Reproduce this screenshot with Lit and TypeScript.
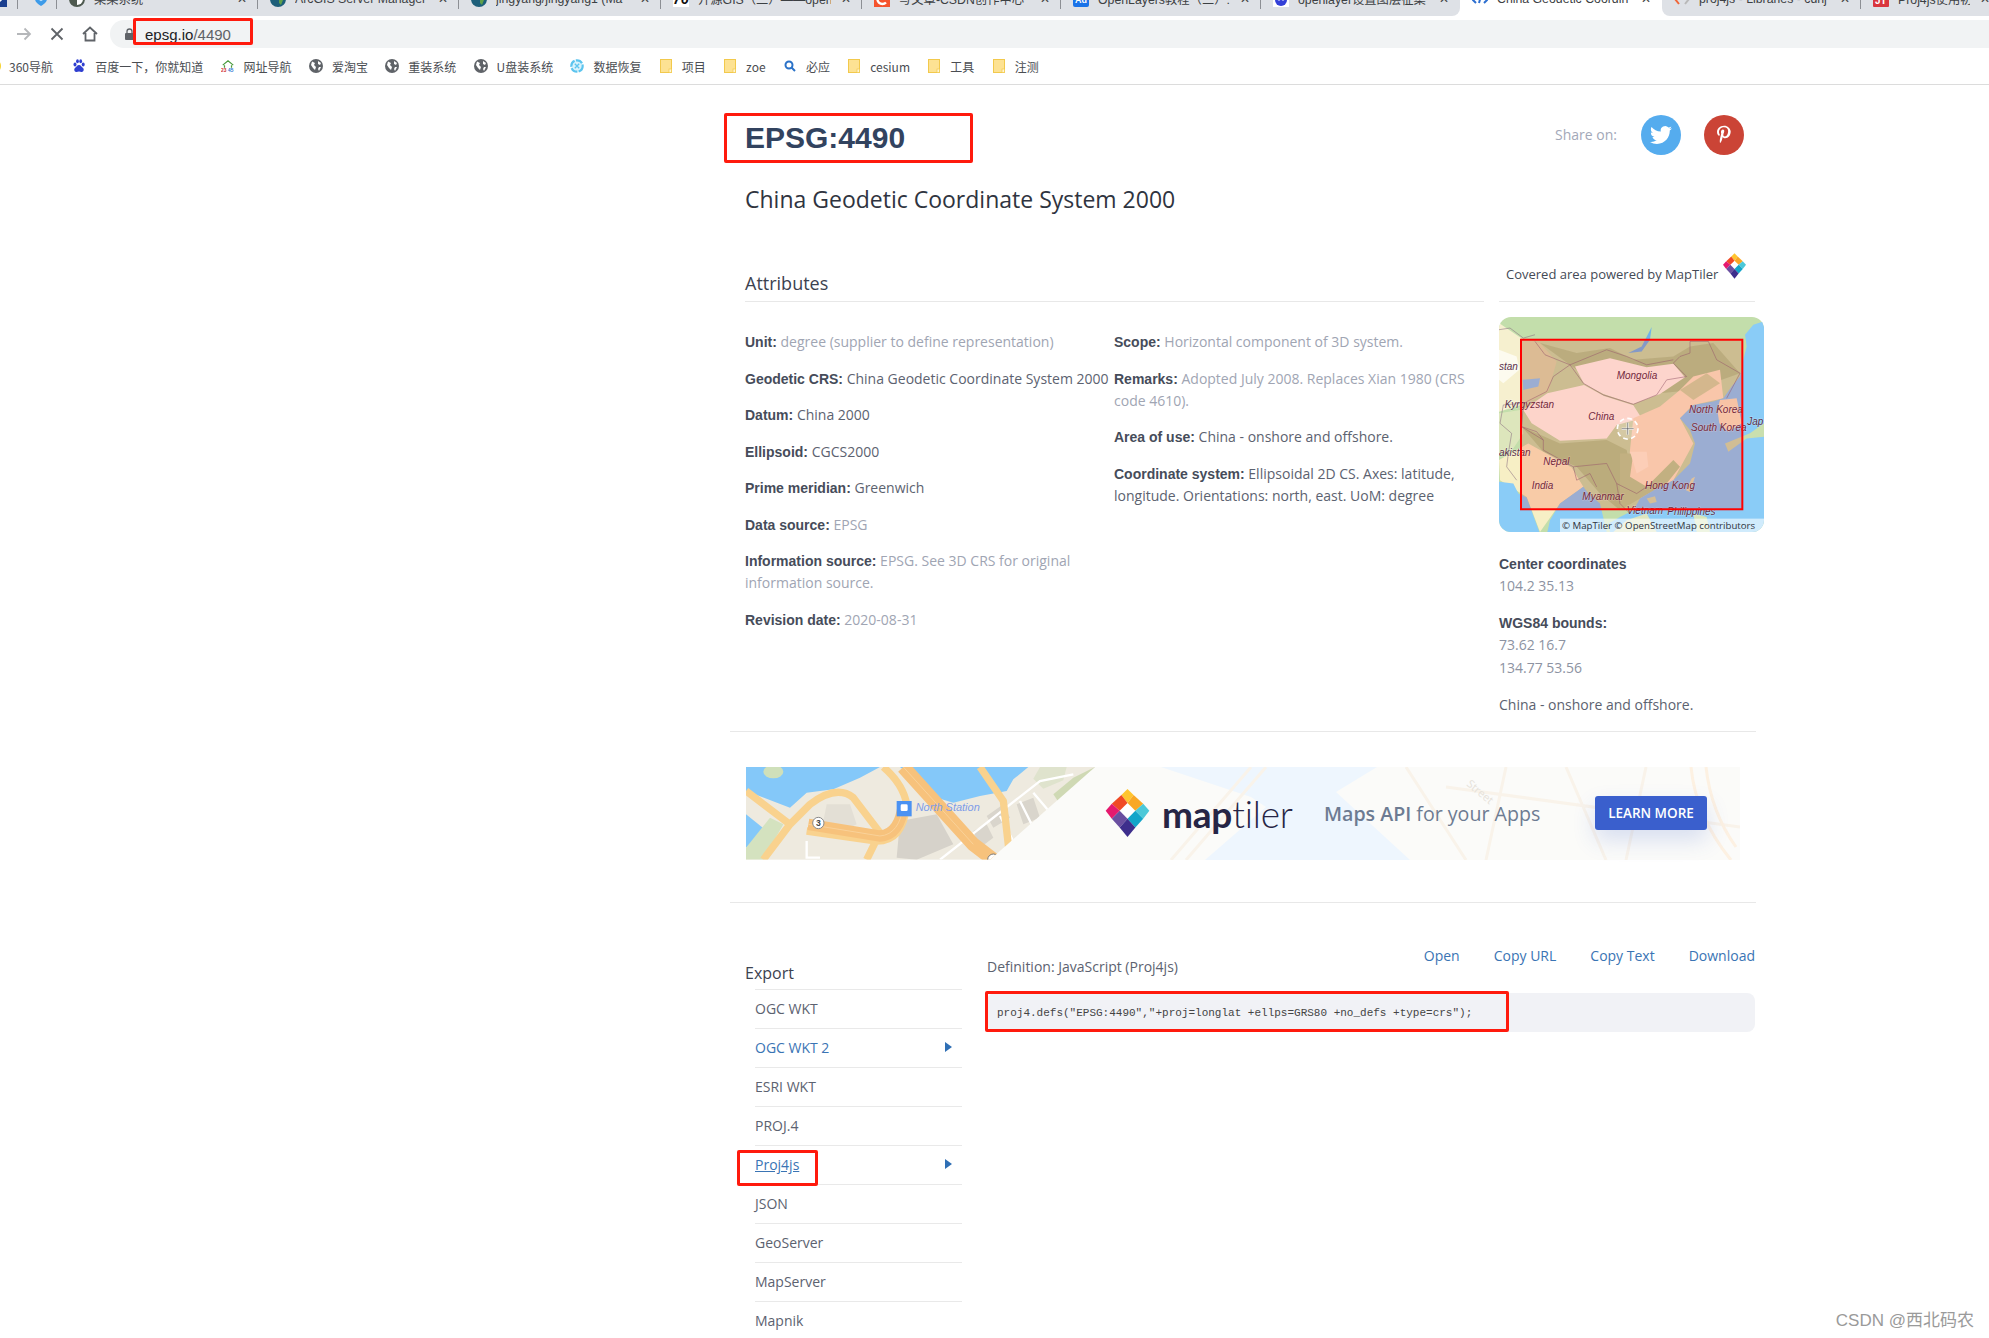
import { LitElement, html, css, svg } from "lit";
import { customElement } from "lit/decorators.js";

const pin = svg`
  <polygon points="50,32 68,50 50,68 32,50" fill="#fff"/>
  <polygon points="36,14 50,0 64,14 50,32" fill="#ffc52f"/>
  <polygon points="64,14 86,34 68,50 50,32" fill="#f9a826"/>
  <polygon points="36,14 50,32 32,50 14,34" fill="#f04a25"/>
  <polygon points="14,34 32,50 14,68 0,50" fill="#e5196e"/>
  <polygon points="86,34 100,50 86,68 68,50" fill="#4cc8d8"/>
  <polygon points="32,50 50,68 32,88 14,68" fill="#6a4fa0"/>
  <polygon points="68,50 86,68 68,88 50,68" fill="#12a5c9"/>
  <polygon points="50,68 68,88 50,110 32,88" fill="#3d2e8c"/>`;

const globe = html`<svg class="ic" viewBox="0 0 14 14"><circle cx="7" cy="7" r="7" fill="#5f6368"/><path d="M3 2.500 6 4 5 6 7 8 6 11 4 9 2 6ZM9 2l3 2-1 2-2-1ZM10 8l2 0-2 4-1-2Z" fill="#fff"/></svg>`;
const folder = html`<svg class="ic" viewBox="0 0 14 14"><rect x="1.500" y=".5" width="11" height="13" fill="#fde293" stroke="#f2c94c"/><rect x="10" y="10" width="2.500" height="3.500" fill="#fff6d5" stroke="#f2c94c" stroke-width=".7"/></svg>`;
const baidu = html`<svg class="ic" viewBox="0 0 14 14" fill="#2f3fd0"><ellipse cx="3" cy="5.500" rx="1.500" ry="2"/><ellipse cx="5.500" cy="2.200" rx="1.400" ry="2"/><ellipse cx="8.700" cy="2.200" rx="1.400" ry="2"/><ellipse cx="11.200" cy="5.500" rx="1.500" ry="2"/><path d="M7 6c2 0 2.500 2 4 3 1.500 1.500.5 4-1.500 4-1 0-1.500-.4-2.500-.4S5.500 13 4.500 13C2.500 13 1.500 10.500 3 9c1.500-1 2-3 4-3Z"/></svg>`;
const house = html`<svg class="ic" viewBox="0 0 16 14"><path d="M2 6 8 1l6 5M4 6v3M12 6v3" fill="none" stroke="#4a9a3c" stroke-width="1.400"/><text class="n" x="0" y="14" font-size="5.500" fill="#d03030" font-weight="700">23</text><text class="n" x="8" y="14" font-size="5.500" fill="#2a6fd0" font-weight="700">45</text></svg>`;
const recover = html`<svg class="ic" viewBox="0 0 16 16"><circle cx="8" cy="8" r="6.500" fill="#d8f2fb" stroke="#5cc4ee" stroke-width="2.500" stroke-dasharray="8 1.500"/><path d="M5.500 5.500l5 5M10.500 5.500l-5 5" stroke="#5cc4ee" stroke-width="1.500"/></svg>`;
const search = html`<svg class="ic" viewBox="0 0 14 14"><circle cx="6" cy="6" r="3.500" fill="none" stroke="#2a72c8" stroke-width="2"/><path d="M8.500 8.500 12 12" stroke="#2a72c8" stroke-width="2"/></svg>`;
const dot = html`<svg class="ic-first" viewBox="0 0 16 14"><circle cx="8" cy="7" r="7" fill="#f6d32d"/></svg>`;

const bookmarks = [
  [baidu, "百度一下，你就知道"], [house, "网址导航"], [globe, "爱淘宝"], [globe, "重装系统"],
  [globe, "U盘装系统"], [recover, "数据恢复"], [folder, "项目"], [folder, "zoe"], [search, "必应"],
  [folder, "cesium"], [folder, "工具"], [folder, "注测"],
];

const edge = html`<svg class="fav edge" viewBox="0 0 16 16"><rect width="16" height="16" fill="#1b3f8f"/><path d="M4 14 14 4" stroke="#fff" stroke-width="3"/></svg>`;
const shield = html`<svg class="fav" viewBox="0 0 16 16"><path d="M8 1 14 3v5c0 3-3 5-6 7-3-2-6-4-6-7V3Z" fill="#3d9be9"/><path d="M3 6l5 3 5-3" stroke="#bfe0fa" fill="none" stroke-width="2"/></svg>`;
const gl = html`<svg class="fav" viewBox="0 0 16 16"><circle cx="8" cy="8" r="8" fill="#4e5a50"/><path d="M8 2a6 6 0 0 1 0 12Z" fill="#fff"/></svg>`;
const earth = html`<svg class="fav" viewBox="0 0 16 16"><circle cx="8" cy="8" r="8" fill="#1d5f7a"/><path d="M3 5l4-2 2 3-3 3ZM9 8l4 1-2 5-2-2Z" fill="#5fa04a"/></svg>`;
const seven = html`<svg class="fav" viewBox="0 0 16 16"><rect width="16" height="16" fill="#fff"/><text class="n" x="0" y="13" font-size="14" font-weight="700" font-style="italic" fill="#111">76</text></svg>`;
const csdn = html`<svg class="fav" viewBox="0 0 16 16"><rect width="16" height="16" fill="#f5532d"/><path d="M12 4.500A5 5 0 1 0 12 11.500" stroke="#fff" stroke-width="2.400" fill="none"/></svg>`;
const ad = html`<svg class="fav" viewBox="0 0 16 16"><rect width="16" height="16" rx="2" fill="#1a73e8"/><text class="n" x="2" y="12" font-size="9" font-weight="700" fill="#fff">Ad</text></svg>`;
const baiduF = html`<svg class="fav" viewBox="0 0 16 16"><rect width="16" height="16" fill="#fff"/><circle cx="8" cy="9" r="6" fill="#3340d8"/><circle cx="6" cy="8" r="1.500" fill="#fff"/><circle cx="10" cy="8" r="1.500" fill="#fff"/></svg>`;
const epsgF = html`<svg class="fav" viewBox="0 0 16 16"><path d="M4 6 1 9l3 3M12 6l3 3-3 3M7 12l2-7" fill="none" stroke="#2d6fd0" stroke-width="2"/></svg>`;
const cdnF = html`<svg class="fav" viewBox="0 0 16 16"><path d="M5 3 1 8l4 5" fill="none" stroke="#f0673a" stroke-width="2"/><path d="M11 3l4 5-4 5" fill="none" stroke="#b9b9b9" stroke-width="2"/></svg>`;
const jsF = html`<svg class="fav" viewBox="0 0 16 16"><rect width="16" height="16" rx="1" fill="#d9363e"/><text class="n" x="2" y="13" font-size="10" font-weight="700" fill="#fff">JT</text></svg>`;

const tabs = [
  { w: 18, icon: edge, text: "", first: true },
  { w: 39, icon: shield, text: "", lead: true },
  { w: 201, icon: gl, text: "某某系统" },
  { w: 201, icon: earth, text: "ArcGIS Server Manager" },
  { w: 202, icon: earth, text: "jingyang/jingyang1 (Ma" },
  { w: 201, icon: seven, text: "开源GIS（二）——open" },
  { w: 199, icon: csdn, text: "写文章-CSDN创作中心" },
  { w: 200, icon: ad, text: "OpenLayers教程（三）: 多" },
  { w: 199, icon: baiduF, text: "openlayer设置图层征集" },
  { w: 202, icon: epsgF, text: "China Geodetic Coordin", active: true },
  { w: 199, icon: cdnF, text: "proj4js - Libraries - cdnj" },
  { w: 140, icon: jsF, text: "Proj4js使用初步入门" },
];

const col1: [string, string, string][] = [
  ["Unit:", "degree (supplier to define representation)", "soft"],
  ["Geodetic CRS:", "China Geodetic Coordinate System 2000", ""],
  ["Datum:", "China 2000", ""],
  ["Ellipsoid:", "CGCS2000", ""],
  ["Prime meridian:", "Greenwich", ""],
  ["Data source:", "EPSG", "soft"],
  ["Information source:", "EPSG. See 3D CRS for original information source.", "soft"],
  ["Revision date:", "2020-08-31", "soft"],
];
const col2: [string, string, string][] = [
  ["Scope:", "Horizontal component of 3D system.", "soft"],
  ["Remarks:", "Adopted July 2008. Replaces Xian 1980 (CRS code 4610).", "soft"],
  ["Area of use:", "China - onshore and offshore.", ""],
  ["Coordinate system:", "Ellipsoidal 2D CS. Axes: latitude, longitude. Orientations: north, east. UoM: degree", ""],
];

const exports_ = [
  ["OGC WKT", ""], ["OGC WKT 2", "open"], ["ESRI WKT", ""], ["PROJ.4", ""], ["Proj4js", "current"],
  ["JSON", ""], ["GeoServer", ""], ["MapServer", ""], ["Mapnik", ""],
];

const chinaMap = html`<svg class="map" viewBox="117 682 795 643" preserveAspectRatio="none">
  <rect x="117" y="682" width="795" height="643" fill="#c3deab"/>
  <polygon points="117,700 183,745 183,945 117,965" fill="#f6f0cf"/>
  <polygon points="117,780 170,800 178,840 130,880 117,870" fill="#fdfbef"/>
  <polygon points="183,745 240,760 290,815 265,905 190,945" fill="#d6dcae"/>
  <polygon points="188,870 240,865 235,890 190,900" fill="#8accf7"/>
  <path d="M505 790 L545 770 L575 712 L570 750 L545 785 Z" fill="#6fb4ea"/>
  <polygon points="240,760 350,790 450,775 520,810 640,800 690,770 760,760 840,850 700,900 600,910 350,840" fill="#b0cb95"/>
  <polygon points="345,830 450,805 560,832 640,822 675,862 600,912 520,942 430,912 372,882" fill="#fdfaf0"/>
  <polygon points="190,960 262,910 372,885 432,918 520,946 545,985 470,1005 440,1045 300,1052 215,1000" fill="#fdf9ee"/>
  <polygon points="185,1010 300,1060 440,1050 500,1080 510,1130 480,1260 420,1210 350,1130 250,1085" fill="#b0ca92"/>
  <polygon points="520,985 600,950 660,900 700,860 780,840 790,925 700,945 660,985 700,1060 640,1170 540,1225 505,1150 510,1080" fill="#f8e9c8"/>
  <polygon points="660,900 740,850 780,880 700,930" fill="#cdd8a6"/>
  <polygon points="480,1090 520,1090 510,1160 560,1190 640,1110 660,1130 620,1180 540,1225 480,1260" fill="#b8cf98"/>
  <polygon points="510,1085 560,1085 565,1130 530,1150" fill="#fcf2d8"/>
  <polygon points="117,1110 205,1060 335,1132 370,1190 300,1240 240,1325 200,1220 120,1170" fill="#f7efc5"/>
  <polygon points="117,970 180,960 190,1030 150,1090 117,1090" fill="#dde6bc"/>
  <path d="M912 695 880 705 855 735 860 770 850 810 840 860 815 890 790 925 760 935 700 945 660 985 690 1020 705 1060 690 1120 640 1170 590 1195 540 1225 520 1260 480 1280 445 1300 450 1325 912 1325Z" fill="#8accf7"/>
  <path d="M117 1175 160 1180 175 1210 200 1222 238 1325 117 1325Z" fill="#8accf7"/>
  <path d="M300 1240 370 1190 385 1210 420 1240 440 1325 262 1325 270 1290Z" fill="#8accf7"/>
  <polygon points="780,930 830,925 845,1000 805,1025 778,1000 772,960" fill="#f6e6c2"/>
  <polygon points="912,1000 870,1030 795,1060 805,1085 860,1045 912,1040" fill="#c9dfae"/>
  <polygon points="705,1160 690,1205 678,1200 695,1165" fill="#d9e3b8"/>
  <polygon points="560,1225 585,1218 590,1235 570,1240" fill="#cfe0ae"/>
  <polygon points="700,1270 740,1280 750,1325 710,1325" fill="#d8e5b9"/>
  <polygon points="500,1290 560,1270 590,1325 460,1325" fill="#dfe6bf"/>
  <path d="M225 755 255 795 330 825 370 880 430 915 520 943 590 915 620 870 680 860 640 820 660 800 690 790 690 755 745 755 770 810 840 850 M330 825 440 780 500 800 560 825 640 810 M330 825 280 860 260 905 190 940 130 945 M190 940 185 1010 250 1050 250 1080 340 1130 440 1120 470 1180 530 1210 560 1190 M117 720 150 715 190 745 225 735 M130 945 120 1000 155 1030 145 1090 140 1130 170 1170 M185 1010 230 1025 250 1050 M340 1130 350 1170 390 1150 410 1190 M470 1180 480 1240 510 1270 M840 850 800 925" fill="none" stroke="#86697f" stroke-width="1.600"/>
  <g class="maplabel">
    <text x="470" y="866">Mongolia</text><text x="385" y="990">China</text><text x="134" y="955">Kyrgyzstan</text>
    <text x="687" y="968">North Korea</text><text x="693" y="1022">South Korea</text><text x="862" y="1006">Jap</text>
    <text x="117" y="842">stan</text><text x="117" y="1098">akistan</text><text x="250" y="1125">Nepal</text>
    <text x="215" y="1197">India</text><text x="367" y="1230">Myanmar</text><text x="555" y="1197">Hong Kong</text>
    <text x="500" y="1272">Vietnam</text><text x="622" y="1275">Philippines</text>
  </g>
  <rect x="183" y="750" width="664" height="507" fill="rgba(255,0,0,.15)" stroke="#f00" stroke-width="6"/>
  <circle cx="503" cy="1016" r="31" fill="none" stroke="#fff" stroke-width="5" stroke-dasharray="14 10"/>
  <circle cx="503" cy="1016" r="31" fill="rgba(255,255,255,.18)"/>
  <path d="M503 998v36M485 1016h36" stroke="#fff" stroke-width="6"/>
  <path d="M503 998v36M485 1016h36" stroke="#555" stroke-width="2"/>
  <rect x="300" y="1285" width="612" height="40" fill="rgba(255,255,255,.6)"/>
  <text class="attr" x="306" y="1316">© MapTiler © OpenStreetMap contributors</text>
</svg>`;

const bannerArt = html`<svg class="art" viewBox="0 0 994 93" preserveAspectRatio="none">
  <rect width="994" height="93" fill="#fbfbf9"/>
  <polygon points="415,0 631,0 590,25 664,93 459,93 520,40 505,30" fill="#eef6fe"/>
  <g fill="none" stroke="#f9f3ea" stroke-width="3">
    <path d="M505 0 425 93M520 0 440 93M660 0 720 93M700 20 994 60M760 0 740 93M820 0 860 93M900 0 880 93"/>
    <path d="M945 0q5 50 40 93M960 0q5 45 30 80" stroke="#fdf1e2"/>
  </g>
  <text class="street" x="720" y="18" transform="rotate(40 720 18)">Street</text>
  <g transform="translate(-6 -6) scale(.33333)">
    <clipPath id="mc"><polygon points="18,18 1065,18 750,296 18,296"/></clipPath>
    <g clip-path="url(#mc)">
      <rect x="18" y="18" width="1050" height="280" fill="#eeeadf"/>
      <path d="M18 18H420L360 50 280 85 200 95 150 140 18 90Z" fill="#84c8f9"/>
      <path d="M480 18H865L820 55 800 90 720 105 640 125 590 110 Z" fill="#84c8f9"/>
      <path d="M18 160 80 210 18 260Z" fill="#84c8f9"/>
      <ellipse cx="100" cy="32" rx="30" ry="20" fill="#cfe0ba"/>
      <path d="M18 296V260L90 170 130 190 70 296Z" fill="#d4e2bf"/>
      <path d="M940 100 1000 50 1065 18 1065 90 960 130Z" fill="#cfd9b4"/>
      <path d="M900 18h80l-10 40-60 25-30-30Z" fill="#dfe3cd"/>
      <path d="M480 180 590 160 640 250 530 296 470 290Z" fill="#d6d2ca"/>
      <path d="M830 130 880 110 900 170 850 190ZM740 165 790 130 810 170 760 200ZM700 210 740 190 760 230 720 260Z" fill="#d9d5cc"/>
      <path d="M260 130h70l20 60-60 30-40-40Z" fill="#e3dfd5"/>
      <g fill="none" stroke="#fff" stroke-width="7">
        <path d="M600 296 900 60 1000 40M680 240 640 180M780 165 830 260M880 95 960 190M840 120 900 240M200 240v50h40"/>
      </g>
      <g fill="none" stroke="#f9d28e" stroke-width="22" stroke-linejoin="round">
        <path d="M18 90 150 190 70 296M150 190 210 130Q290 70 340 110L420 215 380 296M720 18 790 120 810 296M200 210 410 240Q490 240 500 130 490 70 430 18"/>
      </g>
      <path d="M490 18 700 250 760 296" fill="none" stroke="#f7c27c" stroke-width="42"/>
      <path d="M205 190 420 225Q480 220 490 130" fill="none" stroke="#f7c27c" stroke-width="34"/>
      <path d="M205 190 420 225Q480 220 490 130M490 18 700 250" fill="none" stroke="#fbd9a8" stroke-width="2"/>
      <circle cx="235" cy="186" r="17" fill="#fff" stroke="#888" stroke-width="3"/>
      <text class="badge" x="235" y="195" text-anchor="middle">3</text>
      <rect x="470" y="120" width="45" height="46" fill="#4b92f2"/>
      <rect x="482" y="130" width="21" height="20" rx="4" fill="#fff"/>
      <text class="stn" x="527" y="150">North Station</text>
      <circle cx="760" cy="296" r="17" fill="#fff" stroke="#777" stroke-width="3"/>
    </g>
  </g>
</svg>`;

@customElement("app-root")
export class AppRoot extends LitElement {
  static styles = css`
    :host { display: block; position: relative; width: 1989px; height: 1338px; overflow: hidden; background: #fff; font-family: "Open Sans", sans-serif; font-size: 14px; color: #5c6270; }
    .tabstrip { height: 16px; background: #fff; overflow: hidden; display: flex; font: 12.300px "Liberation Sans", "Noto Sans CJK SC", sans-serif; color: #3c4043; }
    .tab { box-sizing: border-box; height: 34px; margin-top: -18px; background: #dee1e6 linear-gradient(#8c8f94, #8c8f94) no-repeat right top / 1px 27px; display: flex; align-items: center; gap: 9px; padding: 0 10px 0 12px; flex: none; overflow: hidden; }
    .tab.first { padding: 0; }
    .tab.lead { padding-left: 15px; padding-right: 0; }
    .tab.active { background: #fff; border-radius: 8px 8px 0 0; }
    .tab.pre { background-image: none; border-bottom-right-radius: 8px; }
    .tab.post { border-bottom-left-radius: 8px; }
    .fav { width: 16px; height: 16px; flex: none; }
    .edge { margin-left: -9px; }
    .tabtext { flex: 1; white-space: nowrap; overflow: hidden; min-width: 0; }
    .close { font-size: 12px; width: 12px; flex: none; color: #444; text-align: center; }
    .n { font-family: "Liberation Sans", sans-serif; }

    .toolbar { height: 32px; display: flex; padding: 4px 0 0 16px; box-sizing: border-box; align-items: stretch; }
    .nav { width: 16px; height: 16px; margin-right: 17px; align-self: center; flex: none; }
    .pill { flex: 1; margin-left: -5px; background: #f1f3f4; border-radius: 14px 0 0 14px; display: flex; align-items: center; padding-left: 15px; gap: 11px; font: 15px "Liberation Sans", sans-serif; color: #202124; }
    .lock { width: 9px; height: 12px; flex: none; }
    .path { color: #5f6368; }

    .bookmarks { height: 36px; box-sizing: content-box; border-bottom: 1px solid #dcdcdc; display: flex; align-items: center; padding-left: 9px; gap: 17.300px; font: 12px "Noto Sans CJK SC", sans-serif; color: #4a4d52; white-space: nowrap; overflow: hidden; }
    .bm { display: flex; align-items: center; gap: 9px; flex: none; }
    .bm.first { margin-left: -23px; margin-right: 2px; gap: 7px; }
    .ic { width: 14px; height: 14px; flex: none; }
    .ic-first { width: 16px; height: 14px; flex: none; }

    .page { margin-left: 730px; width: 1026px; }
    .top { height: 99px; padding: 0 12px 0 15px; display: flex; align-items: center; }
    h1 { margin: 0; padding-top: 6px; font: 700 30px "Liberation Sans", sans-serif; color: #32435f; flex: 1; }
    .share { color: #a3a8b8; margin-right: 24px; }
    .social { width: 40px; height: 40px; border-radius: 50%; display: flex; align-items: center; justify-content: center; flex: none; }
    .social svg { width: 22px; height: 22px; fill: #fff; }
    .tw { background: #55acee; margin-right: 23px; }
    .pt { background: #cb4436; }
    h2 { margin: -1px 0 0 15px; font: 400 23px/32px "Open Sans", sans-serif; color: #2f3440; }

    .info { display: flex; margin-top: 38px; padding-left: 15px; width: 1019px; box-sizing: border-box; }
    .attrs { width: 739px; flex: none; padding-top: 18px; }
    h3 { margin: 0; font: 400 18px/24px "Open Sans", sans-serif; color: #3c4250; padding-bottom: 6px; border-bottom: 1px solid #e8e8e8; }
    .cols { display: grid; grid-template-columns: 369px 370px; margin-top: 29px; }
    .attr-item { margin: 0 0 14.500px; line-height: 22px; }
    .attr-item.soft { color: #a0a5b3; }
    b { font: 700 14px "Liberation Sans", sans-serif; color: #464c5a; }
    .side { margin-left: 15px; width: 265px; flex: none; }
    .side-head { height: 48px; width: 256px; border-bottom: 1px solid #e8e8e8; display: flex; align-items: flex-start; font-size: 13px; color: #444a56; }
    .cover { padding: 12px 5px 0 7px; line-height: 18px; white-space: nowrap; }
    .mini { width: 23px; height: 26px; flex: none; }
    .map { display: block; width: 265px; height: 215px; margin-top: 15px; border-radius: 12px; }
    .maplabel text { font: italic 30px "Liberation Sans", sans-serif; fill: #5a3048; paint-order: stroke; stroke: rgba(255,255,255,.35); stroke-width: 3px; }
    .attr { font: 29px "Open Sans", sans-serif; fill: #2f3440; }
    .facts { margin-top: 20.500px; line-height: 22.400px; }
    .facts p { margin: 0 0 14.500px; color: #8d93a2; }
    .facts p:last-child { margin-bottom: 0; color: #5c6270; }
    .facts span { display: block; }

    hr { border: 0; border-top: 1px solid #e8e8e8; margin: 0; }
    .hr1 { margin-top: 15px; }
    .banner { position: relative; margin: 35px 0 0 16px; width: 994px; height: 93px; display: flex; align-items: center; }
    .art { position: absolute; inset: 0; width: 100%; height: 100%; }
    .street { font: 11px "Open Sans", sans-serif; fill: #e6e2da; }
    .badge { font: 700 26px "Liberation Sans", sans-serif; fill: #444; }
    .stn { font: italic 33px "Liberation Sans", sans-serif; fill: #7d9ce8; }
    .bn { position: relative; display: flex; align-items: center; padding-left: 359px; }
    .logo { width: 45px; height: 48px; flex: none; }
    .word { margin-left: 12px; width: 162px; flex: none; font: 700 37px/1 "Lato", sans-serif; color: #262545; letter-spacing: -.2px; }
    .word i { font-style: normal; font-weight: 300; }
    .tag { flex: none; width: 271px; font: 400 19.600px "Open Sans", sans-serif; color: #6d7b92; white-space: nowrap; }
    .tag em { font-style: normal; font-weight: 600; }
    .btn { width: 112px; height: 34px; background: #3a5fcd; border-radius: 3px; color: #fff; font: 600 13.500px/34px "Open Sans", sans-serif; text-align: center; box-shadow: 0 10px 22px rgba(58,95,205,.18); flex: none; }
    .hr2 { margin-top: 42px; }

    .export { display: flex; padding: 0 1px 0 15px; }
    .ex-side { width: 217px; flex: none; padding-top: 59px; margin-right: 25px; }
    .ex-title { font: 400 16px/22px "Open Sans", sans-serif; color: #3c4250; margin-bottom: 5px; padding-top: 0; }
    .ex-list { list-style: none; margin: 0 0 0 10px; padding: 0; }
    .ex-list li { height: 39px; box-sizing: border-box; border-top: 1px solid #e9e9e9; display: flex; align-items: center; justify-content: space-between; padding-right: 10px; }
    .ex-list li.open, .ex-list li.current { color: #3a74b4; }
    .ex-list li.current span { text-decoration: underline; }
    .tri { width: 7px; height: 10px; flex: none; margin-top: -2px; fill: #2f6fb5; }
    .ex-main { flex: 1; padding-top: 42px; }
    .def-head { display: flex; justify-content: space-between; height: 33px; line-height: 22px; }
    .def-title { padding-top: 11px; }
    .links { display: flex; gap: 34px; color: #3a74b4; }
    .code { height: 39px; background: #f1f2f6; border-radius: 8px; margin-top: 15px; padding-left: 10px; font: 11px/41px "Liberation Mono", monospace; color: #444; white-space: pre; }

    .mark { position: absolute; border: 3px solid #ff1a0d; border-radius: 2px; box-sizing: border-box; pointer-events: none; }
    .m-url { left: 133px; top: 18px; width: 120px; height: 27px; }
    .m-h1 { left: 724px; top: 113px; width: 249px; height: 50px; }
    .m-code { left: 985px; top: 991px; width: 524px; height: 41px; }
    .m-proj { left: 737px; top: 1150px; width: 81px; height: 36px; }
    .watermark { position: absolute; right: 15px; bottom: 7px; font: 17px "Liberation Sans", "Noto Sans CJK SC", sans-serif; color: #9a9a9a; }
  `;

  private attr(a: [string, string, string]) {
    return html`<p class="attr-item ${a[2]}"><b>${a[0]}</b> ${a[1]}</p>`;
  }

  render() {
    return html`
      <div class="tabstrip">
        ${tabs.map((t: any, i) => html`<div class="tab ${t.first ? "first" : ""} ${t.lead ? "lead" : ""} ${t.active ? "active" : ""} ${(tabs[i + 1] as any)?.active ? "pre" : ""} ${(tabs[i - 1] as any)?.active ? "post" : ""}" style="width:${t.w}px">
          ${t.icon}
          ${t.text ? html`<span class="tabtext">${t.text}</span><span class="close">✕</span>` : ""}
        </div>`)}
      </div>
      <div class="toolbar">
        <svg class="nav" viewBox="0 0 16 16"><path d="M1 8h13M8.500 2.500 14 8l-5.500 5.500" fill="none" stroke="#b5b7ba" stroke-width="1.800"/></svg>
        <svg class="nav" viewBox="0 0 16 16"><path d="M2.500 2.500l11 11M13.500 2.500l-11 11" fill="none" stroke="#5f6368" stroke-width="1.800"/></svg>
        <svg class="nav" viewBox="0 0 16 16"><path d="M1 8 8 1.500 15 8M3.500 7v7.500h9V7" fill="none" stroke="#5f6368" stroke-width="1.800"/></svg>
        <div class="pill">
          <svg class="lock" viewBox="0 0 9 12"><path d="M2 5V3.500a2.500 2.500 0 0 1 5 0V5" fill="none" stroke="#5f6368" stroke-width="1.300"/><rect y="5" width="9" height="7" rx="1" fill="#5f6368"/></svg>
          <span>epsg.io<span class="path">/4490</span></span>
        </div>
      </div>
      <div class="bookmarks">
        <div class="bm first">${dot}<span>360导航</span></div>
        ${bookmarks.map((b) => html`<div class="bm">${b[0]}<span>${b[1]}</span></div>`)}
      </div>

      <div class="page">
        <div class="top">
          <h1>EPSG:4490</h1>
          <span class="share">Share on:</span>
          <div class="social tw"><svg viewBox="0 0 24 24"><path d="M23.953 4.57a10 10 0 01-2.825.775 4.958 4.958 0 002.163-2.723c-.951.555-2.005.959-3.127 1.184a4.92 4.92 0 00-8.384 4.482C7.69 8.095 4.067 6.13 1.64 3.162a4.822 4.822 0 00-.666 2.475c0 1.71.87 3.213 2.188 4.096a4.904 4.904 0 01-2.228-.616v.06a4.923 4.923 0 003.946 4.827 4.996 4.996 0 01-2.212.085 4.936 4.936 0 004.604 3.417 9.867 9.867 0 01-6.102 2.105c-.39 0-.779-.023-1.17-.067a13.995 13.995 0 007.557 2.209c9.053 0 13.998-7.496 13.998-13.985 0-.21 0-.42-.015-.63A9.935 9.935 0 0024 4.59z"/></svg></div>
          <div class="social pt"><svg viewBox="0 0 24 24"><path d="M12.200 2C7 2 4.400 5.600 4.400 8.700c0 1.800.7 3.500 2.200 4.100.2.1.5 0 .5-.3l.2-.9c.1-.3 0-.4-.1-.6-.5-.5-.7-1.200-.7-2.200 0-2.800 2.100-5.300 5.400-5.300 3 0 4.600 1.800 4.600 4.200 0 3.200-1.400 5.900-3.500 5.900-1.200 0-2-.9-1.700-2.100.3-1.400 1-2.900 1-3.900 0-.9-.5-1.700-1.500-1.700-1.200 0-2.100 1.200-2.100 2.800 0 1 .3 1.700.3 1.700l-1.400 6c-.4 1.800-.1 3.900 0 4.100 0 .1.2.2.3.1.1-.1 1.400-1.800 1.900-3.500.1-.5.8-3 .8-3 .4.7 1.500 1.400 2.700 1.400 3.600 0 6-3.300 6-7.600C18.900 4.900 16 2 12.200 2z"/></svg></div>
        </div>
        <h2>China Geodetic Coordinate System 2000</h2>

        <div class="info">
          <div class="attrs">
            <h3>Attributes</h3>
            <div class="cols">
              <div>${col1.map((a) => this.attr(a))}</div>
              <div>${col2.map((a) => this.attr(a))}</div>
            </div>
          </div>
          <div class="side">
            <div class="side-head">
              <span class="cover">Covered area powered by MapTiler</span>
              <svg class="mini" viewBox="0 0 100 110">${pin}</svg>
            </div>
            ${chinaMap}
            <div class="facts">
              <p><b>Center coordinates</b><span>104.2 35.13</span></p>
              <p><b>WGS84 bounds:</b><span>73.62 16.7</span><span>134.77 53.56</span></p>
              <p>China - onshore and offshore.</p>
            </div>
          </div>
        </div>
        <hr class="hr1" />

        <div class="banner">
          ${bannerArt}
          <div class="bn">
            <svg class="logo" viewBox="0 0 100 110">${pin}</svg>
            <div class="word">map<i>tiler</i></div>
            <div class="tag"><em>Maps API</em> for your Apps</div>
            <div class="btn">LEARN MORE</div>
          </div>
        </div>
        <hr class="hr2" />

        <div class="export">
          <div class="ex-side">
            <div class="ex-title">Export</div>
            <ul class="ex-list">
              ${exports_.map((e) => html`<li class=${e[1]}><span>${e[0]}</span>${e[1] ? html`<svg class="tri" viewBox="0 0 7 10"><path d="M0 0l7 5-7 5z"/></svg>` : ""}</li>`)}
            </ul>
          </div>
          <div class="ex-main">
            <div class="def-head">
              <span class="def-title">Definition: JavaScript (Proj4js)</span>
              <div class="links"><span>Open</span><span>Copy URL</span><span>Copy Text</span><span>Download</span></div>
            </div>
            <div class="code">proj4.defs("EPSG:4490","+proj=longlat +ellps=GRS80 +no_defs +type=crs");</div>
          </div>
        </div>
      </div>

      <div class="mark m-url"></div>
      <div class="mark m-h1"></div>
      <div class="mark m-code"></div>
      <div class="mark m-proj"></div>
      <div class="watermark">CSDN @西北码农</div>
    `;
  }
}
